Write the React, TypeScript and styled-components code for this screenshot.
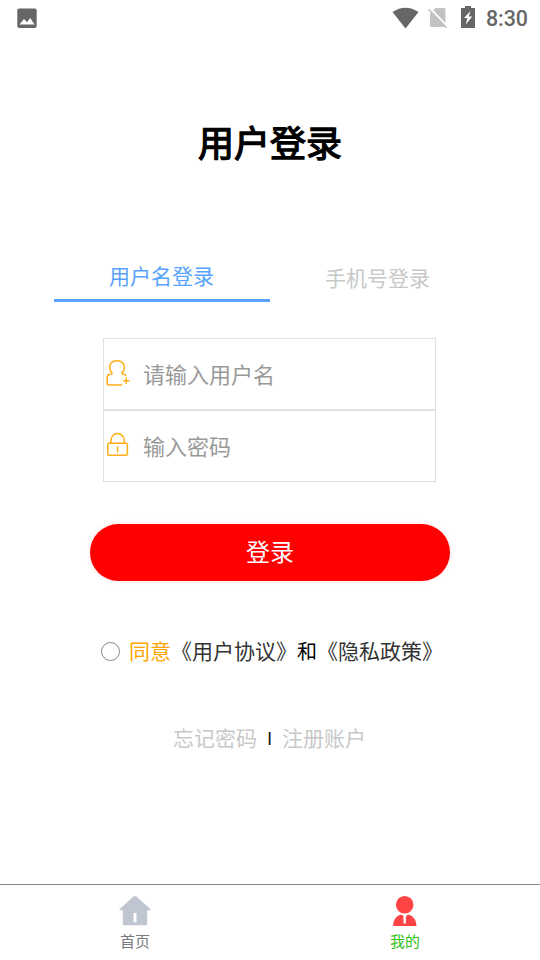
import React, { useState } from "react";
import styled, { createGlobalStyle } from "styled-components";

const GlobalStyle = createGlobalStyle`
  * { box-sizing: border-box; }
  html, body { margin: 0; padding: 0; background: #fff; }
  body, button, input { font-family: Roboto, "Noto Sans CJK SC", sans-serif; }
  button { border: 0; padding: 0; margin: 0; background: none; }
`;

const Screen = styled.div`
  width: 540px;
  height: 960px;
  display: flex;
  flex-direction: column;
  background: #fff;
  overflow: hidden;
`;

const StatusBar = styled.header`
  height: 36px;
  flex: none;
  display: flex;
  align-items: center;
  justify-content: space-between;
  padding: 0 12px 0 17px;
`;

const StatusIcons = styled.div`
  display: flex;
  align-items: center;
`;

const StatusSvg = styled.svg<{ $gap: number; $lift?: number }>`
  display: block;
  margin-right: ${(p) => p.$gap}px;
  margin-bottom: ${(p) => p.$lift ?? 0}px;
`;

const Clock = styled.span`
  font: 500 21.4px/36px Roboto, sans-serif;
  color: #666;
  padding-top: 2px;
`;

const Title = styled.h1`
  margin: 82px 0 0;
  height: 54px;
  line-height: 54px;
  font-size: 36px;
  font-weight: 400;
  -webkit-text-stroke: 1.3px #000;
  text-align: center;
  color: #000;
`;

const Tabs = styled.div`
  display: flex;
  width: 432px;
  margin: 80px auto 0;
`;

const Tab = styled.button<{ $active: boolean }>`
  width: 216px;
  height: 50px;
  padding: ${(p) => (p.$active ? "3px 1px 0 0" : "5px 1px 0 0")};
  font-size: 21px;
  line-height: 44px;
  color: ${(p) => (p.$active ? "#57a3fe" : "#c8c8c8")};
  border-bottom: 3px solid ${(p) => (p.$active ? "#57a3fe" : "transparent")};
`;

const Fields = styled.div`
  width: 333px;
  margin: 36px 0 0 103px;
`;

const Field = styled.label`
  display: flex;
  align-items: center;
  height: 72px;
  border: 1px solid #e0e0e0;
`;

const FieldIcon = styled.svg`
  flex: none;
  display: block;
  margin: 0 11px 2px 1px;
`;

const Input = styled.input`
  flex: 1;
  min-width: 0;
  height: 50px;
  padding: 2px 0 0;
  border: 0;
  outline: 0;
  background: transparent;
  font-size: 22px;
  color: #333;
  &::placeholder { color: #999; opacity: 1; }
`;

const Submit = styled.button`
  flex: none;
  width: 360px;
  height: 57px;
  margin: 42px auto 0;
  border-radius: 29px;
  background: #f00;
  box-shadow: 0 0 5px rgba(255, 0, 60, 0.12);
  color: #fff;
  font-size: 24px;
  line-height: 57px;
  padding-top: 1px;
`;

const Agreement = styled.div`
  display: flex;
  align-items: center;
  height: 32px;
  margin: 55px 0 0 101px;
  font-size: 21px;
  line-height: 32px;
  white-space: nowrap;
`;

const Radio = styled.span`
  width: 19px;
  height: 19px;
  margin: 0 9px 1px 0;
  border: 1.5px solid #8a8a8a;
  border-radius: 50%;
`;

const Phrase = styled.span<{ $color: string; $size?: number }>`
  color: ${(p) => p.$color};
  font-size: ${(p) => p.$size ?? 21}px;
`;

const Links = styled.div`
  display: flex;
  align-items: center;
  height: 32px;
  margin: 55px 0 0 173px;
  line-height: 32px;
`;

const Divider = styled.span`
  width: 25px;
  text-align: center;
  font: 19px/32px Roboto, sans-serif;
  color: #222;
`;

const NavBar = styled.nav`
  display: flex;
  height: 76px;
  margin-top: auto;
  border-top: 1px solid #888;
`;

const NavItem = styled.button<{ $color: string }>`
  flex: 1;
  display: flex;
  flex-direction: column;
  align-items: center;
  padding-top: 10px;
  font-size: 15px;
  line-height: 22px;
  color: ${(p) => p.$color};
`;

const NavIcon = styled.svg`
  display: block;
  margin-bottom: 4px;
`;

export default function App() {
  const [mode, setMode] = useState<"name" | "phone">("name");
  return (
    <Screen>
      <GlobalStyle />
      <StatusBar>
        <StatusSvg $gap={0} width="20" height="20" viewBox="0 0 20 20">
          <rect x="0.3" y="0.5" width="19.4" height="19.4" rx="2" fill="#666" />
          <path d="M2.5 16.5 7 11l3 3.2L13.2 10l4.3 6.5z" fill="#fff" />
        </StatusSvg>
        <StatusIcons>
          <StatusSvg $gap={9} $lift={1} width="27" height="22" viewBox="0 0 27 22">
            <path d="M0.5 5Q13.5-3.5 26.5 5L13.5 21.5z" fill="#666" />
          </StatusSvg>
          <StatusSvg $gap={13} width="20" height="22" viewBox="0 0 20 22">
            <path d="M7.5 1H16q1.5 0 1.5 1.5V19q0 1-1.5 1H3.500q-1.500 0-1.500-1.500V6.500z" fill="#c2c2c2" />
            <path d="M1.500 1 20.500 20.500" stroke="#fff" strokeWidth="2" />
            <path d="M0.500 2.200 18.700 20.800" stroke="#c2c2c2" strokeWidth="1.600" />
          </StatusSvg>
          <StatusSvg $gap={11} $lift={2} width="14" height="22" viewBox="0 0 14 22">
            <path d="M4 0h6v2h4v20H0V2h4z" fill="#666" />
            <path d="M9.500 5 3 12h3.300L4.800 18.500l6.400-8H7.700z" fill="#fff" />
          </StatusSvg>
          <Clock>8:30</Clock>
        </StatusIcons>
      </StatusBar>

      <Title>用户登录</Title>

      <Tabs>
        <Tab $active={mode === "name"} onClick={() => setMode("name")}>用户名登录</Tab>
        <Tab $active={mode === "phone"} onClick={() => setMode("phone")}>手机号登录</Tab>
      </Tabs>

      <Fields>
        <Field>
          <FieldIcon width="27" height="28" viewBox="0 0 27 28" fill="none" stroke="#ffae19" strokeWidth="1.500" strokeLinecap="round" strokeLinejoin="round">
            <path d="M16.700 26H4Q2.200 26 2.200 24V19Q2.200 15.300 5.500 15.300Q7.700 15.200 6.700 13.500C3 9 4.500 1.800 12 1.800S21 9 17.300 13.500Q16.300 15.200 18.500 15.300Q20.400 15.400 20.800 16.500" />
            <path d="M18.500 21.700h5.500M21.200 19v5.500" />
          </FieldIcon>
          <Input placeholder="请输入用户名" />
        </Field>
        <Field>
          <FieldIcon width="27" height="28" viewBox="0 0 27 28" fill="none" stroke="#ffae19" strokeWidth="1.500" strokeLinecap="round">
            <rect x="2.800" y="12.300" width="19.600" height="12" rx="1.200" />
            <path d="M6 12V9.200a6.600 6.600 0 0 1 13.200 0V12M12.600 16v5" />
          </FieldIcon>
          <Input type="password" placeholder="输入密码" />
        </Field>
      </Fields>

      <Submit>登录</Submit>

      <Agreement>
        <Radio />
        <Phrase $color="#ffa500">同意</Phrase>
        <Phrase $color="#333">《用户协议》</Phrase>
        <Phrase $color="#000" $size={20}>和</Phrase>
        <Phrase $color="#333">《隐私政策》</Phrase>
      </Agreement>

      <Links>
        <Phrase $color="#c8c8c8">忘记密码</Phrase>
        <Divider>I</Divider>
        <Phrase $color="#c8c8c8">注册账户</Phrase>
      </Links>

      <NavBar>
        <NavItem $color="#777a80">
          <NavIcon width="32" height="32" viewBox="0 0 32 32" fill="#bfc6d2">
            <path fillRule="evenodd" d="M14.500 1.500Q16 .4 17.500 1.500L31.500 14.200Q32 15.200 31 15.200H28.200V29Q28.200 30.200 27 30.200H5Q3.800 30.200 3.800 29V15.200H1Q0 15.200.5 14.200zM14.500 18V27.200H17.500V18z" />
          </NavIcon>
          首页
        </NavItem>
        <NavItem $color="#2fc316">
          <NavIcon width="32" height="32" viewBox="0 0 32 32" fill="#ff4444">
            <circle cx="15.700" cy="9.700" r="8.800" />
            <path d="M4 31Q4.200 22.500 11 19.700h2.200l1.300 2V28.500h2.400V21.700l1.300-2h2.200Q27.300 22.500 27.500 31z" />
          </NavIcon>
          我的
        </NavItem>
      </NavBar>
    </Screen>
  );
}
